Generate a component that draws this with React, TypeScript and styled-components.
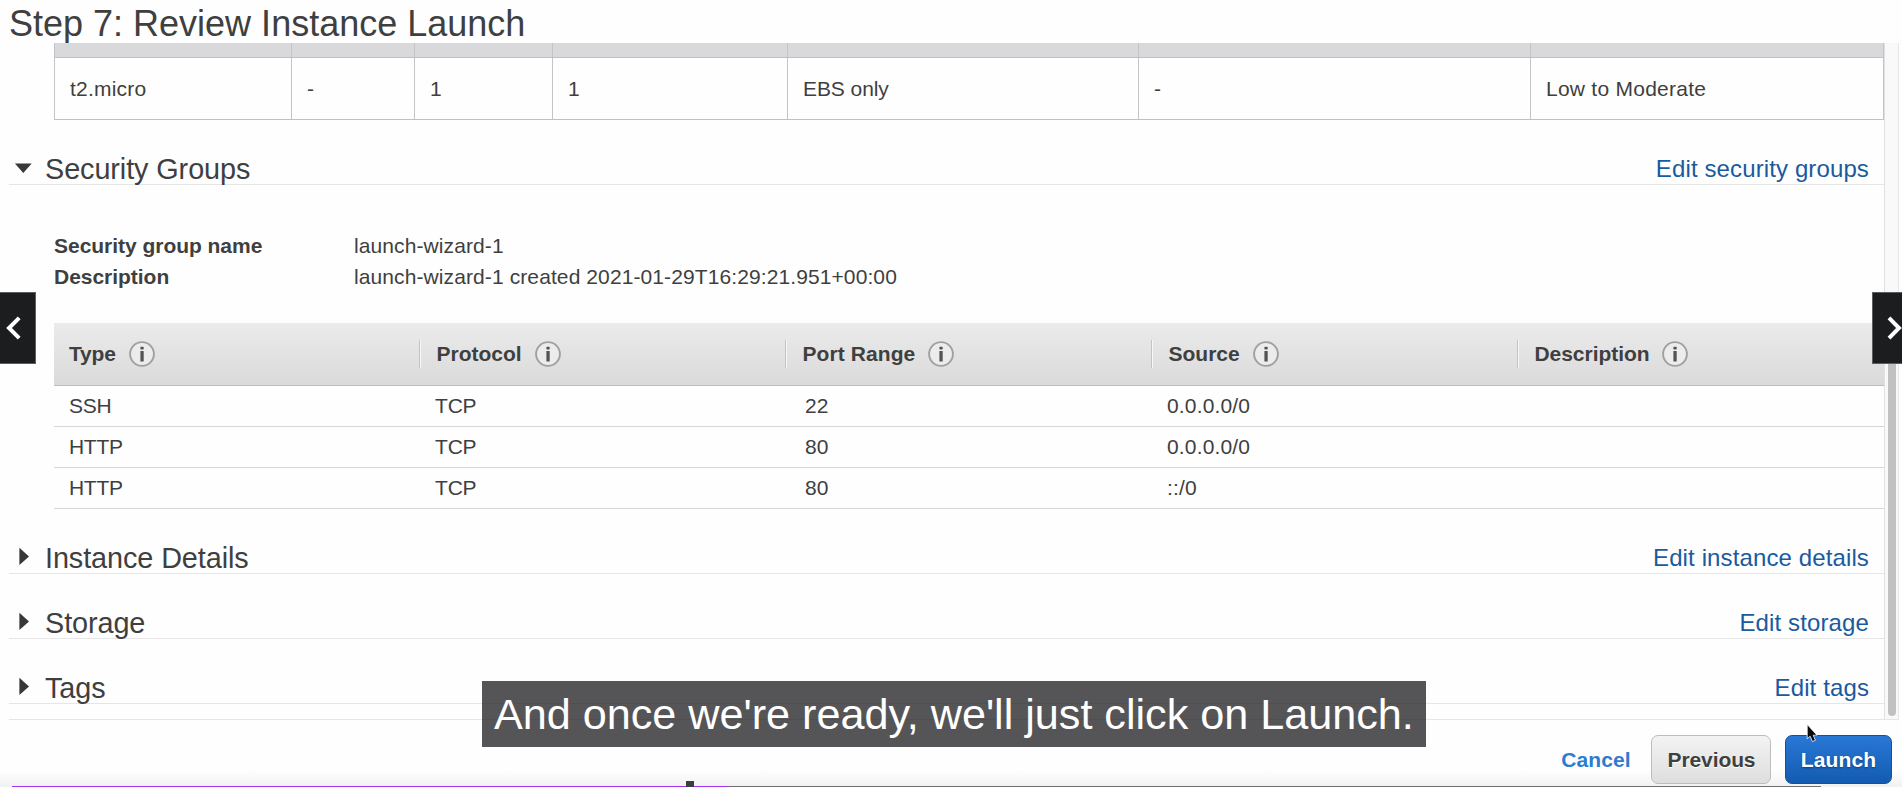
import React from "react";
import styled, { createGlobalStyle } from "styled-components";

const GlobalStyle = createGlobalStyle`
  * { box-sizing: border-box; }
  html, body { margin: 0; padding: 0; overflow: hidden; background: #fefefe; }
  body { font-family: "Liberation Sans", Arial, sans-serif; color: #3f3f40; }
`;

const Screen = styled.div`
  position: relative;
  width: 1902px;
  height: 787px;
  overflow: hidden;
  display: flex;
  flex-direction: column;
  background: #fefefe;
`;

const Title = styled.h1`
  margin: 0;
  padding-left: 9px;
  height: 43px;
  flex: none;
  overflow: hidden;
  font-size: 36px;
  font-weight: 400;
  line-height: 47px;
  letter-spacing: 0;
  white-space: nowrap;
`;

const ScrollArea = styled.div`
  display: flex;
  height: 677px;
  flex: none;
  margin-left: 9px;
  width: 1890px;
`;

const Content = styled.main`
  width: 1875px;
  display: flex;
  flex-direction: column;
`;

const BottomRule = styled.div`
  margin-top: auto;
  height: 1px;
  background: #e6e6e7;
`;

const ScrollTrack = styled.div`
  width: 15px;
  padding: 287px 2px 3px 3px;
  border-left: 1px solid #e0e0e1;
  border-right: 1px solid #e6e6e7;
  border-bottom: 1px solid #e6e6e7;
  background: #f9f9fa;
`;

const ScrollThumb = styled.div`
  width: 8px;
  height: 100%;
  border-radius: 4px;
  background: #c1c1c2;
`;

const InstanceGrid = styled.div`
  margin-left: 45px;
  display: grid;
  grid-template-columns: 237px 123px 138px 235px 351px 392px 353px;
  border-right: 1px solid #c4c4c6;
`;

const InstanceHead = styled.div`
  height: 15px;
  border-left: 1px solid #c4c4c6;
  border-bottom: 1px solid #c0c0c2;
  background: #d9d9db;
`;

const InstanceCell = styled.div<{ $track: number }>`
  height: 62px;
  display: flex;
  align-items: center;
  padding: 1px 0 0 15px;
  border-left: 1px solid #c4c4c6;
  border-bottom: 1px solid #c0c0c2;
  font-size: 21px;
  letter-spacing: ${(p) => p.$track}px;
`;

const SectionBar = styled.div<{ $gap: number }>`
  display: flex;
  align-items: flex-end;
  height: 31px;
  margin-top: ${(p) => p.$gap}px;
  padding-right: 15px;
  border-bottom: 1px solid #e6e6e7;
  line-height: 30px;
  white-space: nowrap;
`;

const Twisty = styled.span`
  width: 36px;
  height: 30px;
  display: block;
  svg { display: block; }
`;

const SectionName = styled.h2`
  margin: 0;
  flex: 1;
  font-size: 28.8px;
  font-weight: 400;
  line-height: 30px;
  letter-spacing: -0.08px;
`;

const EditLink = styled.a`
  font-size: 24px;
  letter-spacing: 0.12px;
  color: #1a5a9e;
`;

const Details = styled.dl`
  margin: 45px 0 0 45px;
  display: grid;
  grid-template-columns: 300px auto;
  line-height: 31px;
  font-size: 21px;
  white-space: nowrap;
`;

const Term = styled.dt`
  font-weight: 700;
  letter-spacing: -0.03px;
`;

const Value = styled.dd`
  margin: 0;
  letter-spacing: 0.1px;
`;

const RuleTable = styled.div`
  margin: 31px 0 0 45px;
  display: flex;
  flex-direction: column;
`;

const RuleHead = styled.div`
  display: grid;
  grid-template-columns: 365px repeat(3, 366px) 367px;
  height: 63px;
  padding-top: 17px;
  border-bottom: 1px solid #bdbdbe;
  background: linear-gradient(#ebebec, #dadadb);
`;

const HeadCell = styled.div<{ $first: boolean; $track: number }>`
  display: flex;
  align-items: center;
  gap: 13px;
  height: 28px;
  padding-left: ${(p) => (p.$first ? 15 : 16.5)}px;
  border-left: ${(p) => (p.$first ? "none" : "1px solid #c3c3c4")};
  box-shadow: ${(p) => (p.$first ? "none" : "inset 1px 0 0 #f7f7f8")};
  font-size: 21px;
  font-weight: 700;
  letter-spacing: ${(p) => p.$track}px;
  white-space: nowrap;
`;

const RuleRow = styled.div`
  display: grid;
  grid-template-columns: repeat(5, 366px);
  height: 41px;
  align-items: center;
  border-bottom: 1px solid #d6d6d7;
`;

const RuleCell = styled.div<{ $indent: number; $track: number }>`
  padding-left: ${(p) => p.$indent}px;
  font-size: 21px;
  letter-spacing: ${(p) => p.$track}px;
`;

const Footer = styled.footer`
  flex: 1;
  display: flex;
  justify-content: flex-end;
  align-items: flex-start;
  padding: 15px 10px 0 0;
  background: linear-gradient(#fefefe 51px, #f1f1f1 67px);
`;

const FooterButton = styled.button<{ $kind: "link" | "plain" | "primary" }>`
  height: 49px;
  padding: ${(p) => (p.$kind === "primary" ? "0" : "0 0 0 1px")};
  margin-left: ${(p) => (p.$kind === "primary" ? 14 : 0)}px;
  width: ${(p) => ({ link: 111, plain: 120, primary: 107 })[p.$kind]}px;
  font: 700 21px "Liberation Sans", Arial, sans-serif;
  letter-spacing: ${(p) => (p.$kind === "plain" ? "-0.1px" : "0.1px")};
  border-radius: 7px;
  border: ${(p) => ({ link: "none", plain: "1px solid #bdbdbe", primary: "1px solid #1a4f94" })[p.$kind]};
  color: ${(p) => ({ link: "#2f7ccf", plain: "#3f3f40", primary: "#ffffff" })[p.$kind]};
  background: ${(p) =>
    ({
      link: "none",
      plain: "linear-gradient(#f3f3f4, #dededf)",
      primary: "linear-gradient(#2878d6, #145bb1)",
    })[p.$kind]};
  text-shadow: ${(p) => ({ link: "none", plain: "0 1px 0 #fff", primary: "0 1px 2px #0b3c7c" })[p.$kind]};
`;

const SlideArrow = styled.button<{ $side: "left" | "right" }>`
  position: absolute;
  top: 292px;
  ${(p) => p.$side}: 0;
  width: ${(p) => (p.$side === "left" ? 36 : 30)}px;
  height: 72px;
  padding: 0;
  border: 1px solid #5b5d60;
  border-${(p) => p.$side}: none;
  background: #1c1d1f;
  svg { display: block; }
`;

const Caption = styled.div`
  position: absolute;
  left: 482px;
  top: 681px;
  width: 944px;
  height: 66px;
  padding-left: 12px;
  background: rgba(28, 28, 31, 0.75);
  color: #ffffff;
  font-size: 43.2px;
  line-height: 66px;
  letter-spacing: -0.02px;
  white-space: nowrap;
`;

const Progress = styled.div`
  position: absolute;
  left: 12px;
  bottom: 0;
  width: 1809px;
  height: 1px;
  background: #6e6f71;
`;

const Played = styled.div`
  width: 716px;
  height: 1px;
  background: #a033f0;
`;

const Playhead = styled.div`
  position: absolute;
  left: 674px;
  bottom: 0;
  width: 8px;
  height: 6px;
  background: #3a3d42;
`;

const Pointer = styled.svg`
  position: absolute;
  left: 1805px;
  top: 723px;
`;

const InfoIcon = () => (
  <svg width="26" height="26" viewBox="0 0 26 26">
    <circle cx="13" cy="13" r="11.9" fill="#ececed" stroke="#a0a0a1" strokeWidth="1.9" />
    <rect x="11.4" y="10" width="3.3" height="10.4" rx="0.5" fill="#545456" />
    <rect x="11.4" y="5.8" width="3.3" height="2.8" rx="0.8" fill="#545456" />
  </svg>
);

const Section = ({ name, link, gap, open }: { name: string; link: string; gap: number; open?: boolean }) => (
  <SectionBar $gap={gap}>
    <Twisty>
      <svg width="36" height="30" viewBox="0 0 36 30">
        <path d={open ? "M5.9 9.6H22.7L14.3 19Z" : "M10.4 4.8V22L20 13.4Z"} fill="#38383a" />
      </svg>
    </Twisty>
    <SectionName>{name}</SectionName>
    <EditLink>{link}</EditLink>
  </SectionBar>
);

const instance = [
  { text: "t2.micro", track: 0.2 },
  { text: "-", track: 0 },
  { text: "1", track: 0 },
  { text: "1", track: 0 },
  { text: "EBS only", track: -0.08 },
  { text: "-", track: 0 },
  { text: "Low to Moderate", track: 0.25 },
];

const columns = [
  { name: "Type", indent: 15, headTrack: -0.2, track: -0.3 },
  { name: "Protocol", indent: 15, headTrack: 0, track: -0.2 },
  { name: "Port Range", indent: 19, headTrack: 0.08, track: 0 },
  { name: "Source", indent: 15, headTrack: 0, track: 0.15 },
  { name: "Description", indent: 15, headTrack: -0.05, track: 0 },
];

const rules = [
  ["SSH", "TCP", "22", "0.0.0.0/0", ""],
  ["HTTP", "TCP", "80", "0.0.0.0/0", ""],
  ["HTTP", "TCP", "80", "::/0", ""],
];

export default function App() {
  return (
    <Screen>
      <GlobalStyle />
      <Title>Step 7: Review Instance Launch</Title>
      <ScrollArea>
        <Content>
          <InstanceGrid>
            {instance.map((_, i) => (
              <InstanceHead key={i} />
            ))}
            {instance.map((cell, i) => (
              <InstanceCell key={i} $track={cell.track}>
                {cell.text}
              </InstanceCell>
            ))}
          </InstanceGrid>
          <Section name="Security Groups" link="Edit security groups" gap={34} open />
          <Details>
            <Term>Security group name</Term>
            <Value>launch-wizard-1</Value>
            <Term>Description</Term>
            <Value>launch-wizard-1 created 2021-01-29T16:29:21.951+00:00</Value>
          </Details>
          <RuleTable>
            <RuleHead>
              {columns.map((column, i) => (
                <HeadCell key={column.name} $first={i === 0} $track={column.headTrack}>
                  {column.name}
                  <InfoIcon />
                </HeadCell>
              ))}
            </RuleHead>
            {rules.map((row, r) => (
              <RuleRow key={r}>
                {row.map((text, i) => (
                  <RuleCell key={i} $indent={columns[i].indent} $track={columns[i].track}>
                    {text}
                  </RuleCell>
                ))}
              </RuleRow>
            ))}
          </RuleTable>
          <Section name="Instance Details" link="Edit instance details" gap={34} />
          <Section name="Storage" link="Edit storage" gap={34} />
          <Section name="Tags" link="Edit tags" gap={34} />
          <BottomRule />
        </Content>
        <ScrollTrack>
          <ScrollThumb />
        </ScrollTrack>
      </ScrollArea>
      <Footer>
        <FooterButton $kind="link">Cancel</FooterButton>
        <FooterButton $kind="plain">Previous</FooterButton>
        <FooterButton $kind="primary">Launch</FooterButton>
      </Footer>
      <SlideArrow $side="left" aria-label="Previous slide">
        <svg width="35" height="70" viewBox="0 0 35 70">
          <path d="M19.2 24.8L9 35L19.2 45.2" fill="none" stroke="#fff" strokeWidth="4" />
        </svg>
      </SlideArrow>
      <SlideArrow $side="right" aria-label="Next slide">
        <svg width="29" height="70" viewBox="0 0 29 70">
          <path d="M16 24.8L26 35L16 45.2" fill="none" stroke="#fff" strokeWidth="4" />
        </svg>
      </SlideArrow>
      <Caption>And once we're ready, we'll just click on Launch.</Caption>
      <Progress>
        <Played />
        <Playhead />
      </Progress>
      <Pointer width="14" height="21" viewBox="0 0 14 21">
        <path
          d="M2.2 1.4V15.8L5.2 13.2L7.4 18.6L10.4 17.3L8.2 12.2H12Z"
          fill="#0a0a0a"
          stroke="#fff"
          strokeWidth="0.8"
        />
      </Pointer>
    </Screen>
  );
}
